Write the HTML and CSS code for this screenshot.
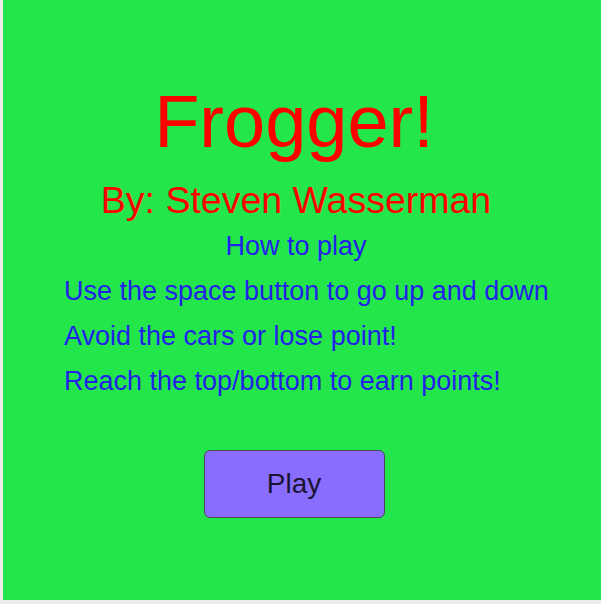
FILE: index.html
```html
<!DOCTYPE html>
<html>
<head>
<meta charset="utf-8">
<link rel="stylesheet" href="styles.css">
</head>
<body>
<div class="stage">
  <div class="content">
    <h1 class="title">Frogger!</h1>
    <h2 class="author">By: Steven Wasserman</h2>
    <p class="howto">How to play</p>
    <ul class="rules">
      <li>Use the space button to go up and down</li>
      <li>Avoid the cars or lose point!</li>
      <li>Reach the top/bottom to earn points!</li>
    </ul>
    <button class="play">Play</button>
  </div>
</div>
</body>
</html>
```
FILE: styles.css
```css
html, body {
  margin: 0;
  padding: 0;
  background: #ececec;
}
body {
  width: 601px;
  height: 604px;
  overflow: hidden;
  font-family: "Liberation Sans", Arial, sans-serif;
}
.stage {
  margin-left: 3px;
  width: 598px;
  height: 600px;
  background: #23e64b;
  overflow: hidden;
}
.content {
  width: 582px;
  display: flex;
  flex-direction: column;
  align-items: center;
  padding-top: 85px;
}
.title {
  margin: 0;
  font-size: 74px;
  line-height: 74px;
  font-weight: normal;
  color: #ff0000;
}
.author {
  margin: 23px 0 0 0;
  padding-left: 4px;
  font-size: 37.5px;
  line-height: 37px;
  font-weight: normal;
  color: #ff0000;
}
.howto {
  margin: 5px 0 0 0;
  padding-left: 4px;
  font-size: 27px;
  line-height: 45px;
  color: #2222e8;
}
.rules {
  align-self: stretch;
  list-style: none;
  margin: 0;
  padding: 0 0 0 61px;
  font-size: 27px;
  line-height: 45px;
  color: #2222e8;
}
.play {
  margin-top: 46px;
  width: 181px;
  height: 68px;
  background: #886dff;
  border: 1px solid #4a4a5a;
  border-radius: 6px;
  font-family: "Liberation Sans", Arial, sans-serif;
  font-size: 28px;
  color: #1a1433;
  padding: 0;
}
```
